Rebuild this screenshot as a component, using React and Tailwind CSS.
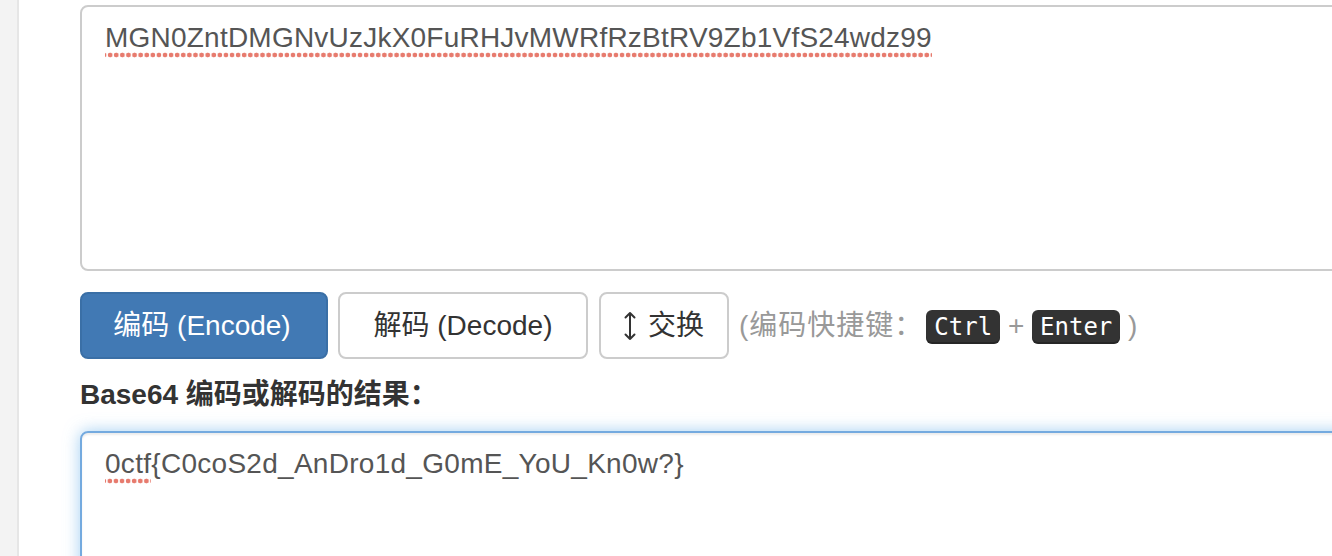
import { useState } from 'react'

const dots =
  'inline-block bg-[radial-gradient(circle,#e77b6e_2.1px,transparent_2.7px)] bg-[length:6.1px_6px] bg-repeat-x bg-bottom'

function Kbd({ children }) {
  return (
    <kbd className="inline-block rounded-[6px] bg-[#333] px-[8px] py-[2px] align-middle text-[24px] leading-[30px] text-white shadow-[inset_0_-2px_0_rgba(0,0,0,0.25)] [font-family:'DejaVu_Sans_Mono',monospace]">
      {children}
    </kbd>
  )
}

function SwapIcon() {
  return (
    <svg width="12" height="30" viewBox="0 0 12 30" fill="none" stroke="#333" strokeWidth="2" strokeLinecap="round" strokeLinejoin="round">
      <path d="M6 2v26M1.5 6.5 6 2l4.5 4.5M1.5 23.5 6 28l4.5-4.5" />
    </svg>
  )
}

export default function App() {
  const [input] = useState('MGN0ZntDMGNvUzJkX0FuRHJvMWRfRzBtRV9Zb1VfS24wdz99')
  const [output] = useState('0ctf{C0coS2d_AnDro1d_G0mE_YoU_Kn0w?}')

  return (
    <div className="flex h-[556px] w-full overflow-hidden bg-white text-[28px] leading-[40px] text-[#333] [font-family:'Liberation_Sans','Noto_Sans_CJK_SC',sans-serif]">
      {/* side rail */}
      <div className="w-[19px] shrink-0 border-r-2 border-[#e6e6e6] bg-[#f3f3f3]" />

      <div className="w-[1400px] shrink-0 pl-[61px] pt-[5px]">
        {/* source textarea */}
        <div className="h-[266px] rounded-[8px] border-2 border-[#ccc] px-[23px] pt-[11px] tracking-[0.22px] text-[#555]">
          <span className={dots}>{input}</span>
        </div>

        {/* actions */}
        <div className="mt-[21px] flex h-[67px] items-center">
          <button className="h-[67px] w-[248px] rounded-[8px] border-2 border-[#3a6fa6] bg-[#4179b4] pr-[4px] text-white">
            编码 (Encode)
          </button>
          <button className="ml-[10px] h-[67px] w-[250px] rounded-[8px] border-2 border-[#ccc] bg-white text-[#333]">
            解码 (Decode)
          </button>
          <button className="ml-[11px] flex h-[67px] w-[130px] items-center justify-center gap-[12px] rounded-[8px] border-2 border-[#ccc] bg-white text-[#333]">
            <SwapIcon />
            <span>交换</span>
          </button>
          <div className="ml-[10px] text-[#999]">
            <span className="tracking-[1px]">(编码快捷键：</span>
            <span className="ml-[3px]"><Kbd>Ctrl</Kbd></span> + <Kbd>Enter</Kbd> )
          </div>
        </div>

        <div className="mt-[16px] font-bold text-[#333]">Base64 编码或解码的结果：</div>

        {/* result textarea */}
        <div className="mt-[16px] h-[200px] rounded-[8px] border-2 border-[#74aadf] px-[23px] pt-[11px] tracking-[0.28px] text-[#555] shadow-[inset_0_2px_2px_rgba(0,0,0,0.075),0_0_16px_rgba(102,175,233,0.6)]">
          <span className={dots}>{output.slice(0, 4)}</span>
          {output.slice(4)}
        </div>
      </div>
    </div>
  )
}
